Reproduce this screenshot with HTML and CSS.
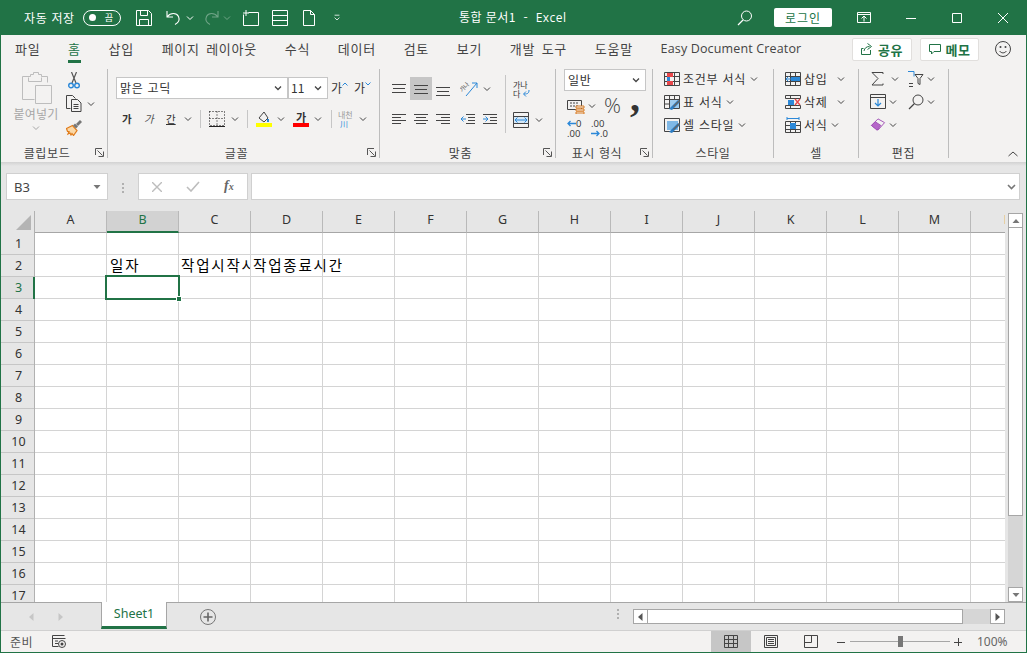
FILE: index.html
```html
<!DOCTYPE html>
<html lang="ko">
<head>
<meta charset="utf-8">
<title>통합 문서1 - Excel</title>
<link rel="stylesheet" href="styles.css">
</head>
<body>
<div class="window">
  <header class="titlebar">
    <div class="qat">
      <span class="autosave">자동 저장</span>
      <span class="toggle"><i class="dot"></i><b>끔</b></span>
      <svg class="w16 ml15" viewBox="0 0 16 16"><path d="M.5.5h12l3 3v12H.5zM4.500.5v5h7v-5M3.500 15.500v-6h9v6" fill="none" stroke="#fff"/></svg>
      <svg class="w16 ml14" viewBox="0 0 16 16"><path d="M1 1v6h6M1.500 6.500c3-4 9-4 11 0 1.500 3.500-.5 6.500-3.500 8" fill="none" stroke="#fff" stroke-width="1.100"/></svg>
      <svg class="w8 ml4" viewBox="0 0 8 8"><path d="M1 2.500l3 3 3-3" fill="none" stroke="#fff"/></svg>
      <svg class="w16 ml9 faded" viewBox="0 0 16 16"><path d="M15 1v6H9M14.500 6.500c-3-4-9-4-11 0-1.500 3.500.5 6.500 3.500 8" fill="none" stroke="#fff" stroke-width="1.100"/></svg>
      <svg class="w8 ml4 faded" viewBox="0 0 8 8"><path d="M1 2.500l3 3 3-3" fill="none" stroke="#fff"/></svg>
      <svg class="w16 ml12" viewBox="0 0 16 16"><path d="M5.500 2.500h10v13H.5v-11M0 3h6M3 0v6" fill="none" stroke="#fff"/></svg>
      <svg class="w16 ml13" viewBox="0 0 16 16"><path d="M.5.500h15v15H.5zM.5 5.500h15M.5 10.500h15" fill="none" stroke="#fff"/></svg>
      <svg class="w12x16 ml15" viewBox="0 0 12 16"><path d="M.5.500h7l4 4v11H.5zM7.500.500v4h4" fill="none" stroke="#fff"/></svg>
      <svg class="w8 ml18" viewBox="0 0 8 10"><path d="M1 1.500h6M1 4.500l3 3 3-3" fill="none" stroke="#fff"/></svg>
    </div>
    <div class="doctitle">통합 문서1&nbsp; -&nbsp; <span class="latin">Excel</span></div>
    <div class="winctl">
      <svg class="w16" viewBox="0 0 16 16"><circle cx="9.500" cy="6" r="5" fill="none" stroke="#fff"/><path d="M6 10l-5 5" fill="none" stroke="#fff" stroke-width="1.200"/></svg>
      <span class="signin">로그인</span>
      <svg class="w14 ml25" viewBox="0 0 14 11"><path d="M.5.500h13v10H.5zM.5 2.500h13M7 9.500V4.500M4.500 6.500L7 4l2.500 2.500" fill="none" stroke="#fff"/></svg>
      <svg class="w10 ml35" viewBox="0 0 10 10"><path d="M0 5.500h10" stroke="#fff"/></svg>
      <svg class="w10 ml36" viewBox="0 0 10 10"><path d="M.5.500h9v9h-9z" fill="none" stroke="#fff"/></svg>
      <svg class="w10 ml36" viewBox="0 0 10 10"><path d="M0 0l10 10M10 0L0 10" stroke="#fff"/></svg>
    </div>
  </header>

  <nav class="tabs">
    <span>파일</span><span class="active">홈</span><span>삽입</span><span>페이지 레이아웃</span><span>수식</span><span>데이터</span><span>검토</span><span>보기</span><span>개발 도구</span><span>도움말</span><span class="latin easy">Easy Document Creator</span>
    <span class="tab-actions">
      <span class="pill pill-share">
        <svg class="w12" viewBox="0 0 12 12"><path d="M9.500 7v4.500H.5v-6h2M3 8c.5-3 2.500-4.500 5.500-4.500M6.500.5l4 3-4 3" fill="none" stroke="#217346"/></svg>공유</span>
      <span class="pill pill-memo">
        <svg class="w12" viewBox="0 0 12 12"><path d="M.5 1.500h11v7H5l-2.500 2.500v-2.500h-2z" fill="none" stroke="#217346"/></svg>메모</span>
      <svg class="smiley" viewBox="0 0 16 16"><circle cx="8" cy="8" r="7.500" fill="none" stroke="#444"/><circle cx="5.500" cy="6" r="1" fill="#444"/><circle cx="10.500" cy="6" r="1" fill="#444"/><path d="M4.500 10c2 2.500 5 2.500 7 0" fill="none" stroke="#444"/></svg>
    </span>
  </nav>

  <section class="ribbon">
    <div class="group g-clip">
      <div class="body clip-body">
        <div class="paste">
          <svg class="paste-ic" viewBox="0 0 30 33"><path d="M.5 4.500h8v-2h3v-2h5v2h3v2h6v6M.5 4.500v23h12" fill="none" stroke="#bdbdbd"/><path d="M6.500 5.500v4h13v-4" fill="none" stroke="#bdbdbd"/><path d="M13.500 13.500h16v18h-16z" fill="#f3f2f1" stroke="#bdbdbd"/></svg>
          <span class="paste-label">붙여넣기</span>
          <svg class="w8 chevg" viewBox="0 0 8 8"><path d="M1 2.500l3 3 3-3" fill="none" stroke="#a6a6a6"/></svg>
        </div>
        <div class="clip-tools">
          <svg class="cut" viewBox="0 0 12 17"><path d="M3.500 0l4.500 11M8.500 0L4 11" fill="none" stroke="#555" stroke-width="1.200"/><circle cx="3" cy="13.500" r="2.300" fill="none" stroke="#2b88d8" stroke-width="1.400"/><circle cx="9" cy="13.500" r="2.300" fill="none" stroke="#2b88d8" stroke-width="1.400"/></svg>
          <div class="copy">
            <svg class="copy-ic" viewBox="0 0 16 17"><path d="M4.500 13.500H.5V.5h6l3 3M5.500 4.500h6l3.500 3.500v8.500H5.500zM7.500 9.500h5M7.500 11.500h5M7.500 13.500h5" fill="none" stroke="#444"/></svg>
            <svg class="w8 ml5" viewBox="0 0 8 8"><path d="M1 2.500l3 3 3-3" fill="none" stroke="#444"/></svg>
          </div>
          <svg class="brush" viewBox="0 0 16 16"><path d="M.5 8.500l6-3 4.500 5-3.500 5-1.500-2-1 1.500-1-2-2 1 1-2.500-1.500 0z" fill="#fbd9a8" stroke="#e07b1a" stroke-width="1.200"/><path d="M7 5.500l2-2 3 3-2 2z" fill="#777"/><path d="M10 4l4-4 2 2-4 4z" fill="#777"/></svg>
        </div>
      </div>
      <div class="glabel"><i></i><span>클립보드</span><svg class="launch" viewBox="0 0 9 9"><path d="M.5 7V.5H7M2.500 2.500l5 5M8.500 3.500v5h-5" fill="none" stroke="#555"/></svg></div>
    </div>

    <div class="group g-font">
      <div class="body font-body">
        <div class="font-row1">
          <span class="combo combo-font">맑은 고딕<svg class="w8" viewBox="0 0 8 8"><path d="M1 2.500l3 3 3-3" fill="none" stroke="#444" stroke-width="1.300"/></svg></span>
          <span class="combo combo-size">11<svg class="w8" viewBox="0 0 8 8"><path d="M1 2.500l3 3 3-3" fill="none" stroke="#444" stroke-width="1.300"/></svg></span>
          <span class="fontstep">가<svg class="w6 up" viewBox="0 0 6 4"><path d="M.5 3.500L3 1l2.500 2.500" fill="none" stroke="#2b88d8"/></svg></span>
          <span class="fontstep small">가<svg class="w6 up" viewBox="0 0 6 4"><path d="M.5.5L3 3 5.500.5" fill="none" stroke="#2b88d8"/></svg></span>
        </div>
        <div class="font-row2">
          <b class="fs">가</b><em class="fs ml12">가</em><span class="fs ml12 under">간</span>
          <svg class="w8 ml8" viewBox="0 0 8 8"><path d="M1 2.500l3 3 3-3" fill="none" stroke="#444"/></svg>
          <i class="vsep ml8"></i>
          <svg class="w16 ml8" viewBox="0 0 16 16"><path d="M.5.500h15v14H.5zM8 .5v14M.5 7.500h15" fill="none" stroke="#111" stroke-dasharray="1 2"/><path d="M0 15.500h16" stroke="#222"/></svg>
          <svg class="w8 ml6" viewBox="0 0 8 8"><path d="M1 2.500l3 3 3-3" fill="none" stroke="#444"/></svg>
          <i class="vsep ml8"></i>
          <svg class="w16 ml8" viewBox="0 0 16 16"><path d="M3 7l5-6 4 6-4 4z" fill="none" stroke="#444"/><path d="M12 8v3" stroke="#2b88d8" stroke-width="2"/><path d="M0 12h16v4H0z" fill="#ffff00"/></svg>
          <svg class="w8 ml5" viewBox="0 0 8 8"><path d="M1 2.500l3 3 3-3" fill="none" stroke="#444"/></svg>
          <span class="fcolor ml8">가</span>
          <svg class="w8 ml5" viewBox="0 0 8 8"><path d="M1 2.500l3 3 3-3" fill="none" stroke="#444"/></svg>
          <i class="vsep ml9"></i>
          <span class="ruby ml6">내천<br><u>川</u></span>
          <svg class="w8 ml9" viewBox="0 0 8 8"><path d="M1 2.500l3 3 3-3" fill="none" stroke="#444"/></svg>
        </div>
      </div>
      <div class="glabel"><i></i><span>글꼴</span><svg class="launch" viewBox="0 0 9 9"><path d="M.5 7V.5H7M2.500 2.500l5 5M8.500 3.500v5h-5" fill="none" stroke="#555"/></svg></div>
    </div>

    <div class="group g-align">
      <div class="body align-body">
        <div class="align-main">
          <div class="al-row1">
            <span class="albtn"><svg class="w14" viewBox="0 0 14 11"><path d="M0 1.500h14M1 5.500h12M0 9.500h14" stroke="#444"/></svg></span>
            <span class="albtn on"><svg class="w14" viewBox="0 0 14 11"><path d="M0 2.500h14M1 6.500h12M0 10.500h14" stroke="#444"/></svg></span>
            <span class="albtn low"><svg class="w14" viewBox="0 0 14 11"><path d="M0 1.500h14M1 5.500h12M0 9.500h14" stroke="#444"/></svg></span>
            <svg class="orient" viewBox="0 0 18 16"><path d="M6 15L17 2M12 2h5v5" fill="none" stroke="#2b88d8"/><text x="0" y="9" class="tiny" transform="rotate(-45 4 8)">가나</text></svg>
            <svg class="w8 ml5" viewBox="0 0 8 8"><path d="M1 2.500l3 3 3-3" fill="none" stroke="#444"/></svg>
          </div>
          <div class="al-row2">
            <svg class="w14" viewBox="0 0 14 11"><path d="M0 .5h14M0 3.500h9M0 6.500h14M0 9.500h9" stroke="#444"/></svg>
            <svg class="w14 ml8" viewBox="0 0 14 11"><path d="M0 .5h14M2 3.500h10M0 6.500h14M2 9.500h10" stroke="#444"/></svg>
            <svg class="w14 ml8" viewBox="0 0 14 11"><path d="M0 .5h14M5 3.500h9M0 6.500h14M5 9.500h9" stroke="#444"/></svg>
            <svg class="w14 ml11" viewBox="0 0 14 11"><path d="M5 .5h9M7 3.500h7M7 6.500h7M5 9.500h9" stroke="#444"/><path d="M5 5H0M2.500 2.500L0 5l2.500 2.500" fill="none" stroke="#2b88d8"/></svg>
            <svg class="w14 ml8" viewBox="0 0 14 11"><path d="M0 .5h14M7 3.500h7M7 6.500h7M0 9.500h14" stroke="#444"/><path d="M0 5h5M2.500 2.500L5 5 2.500 7.500" fill="none" stroke="#2b88d8"/></svg>
          </div>
        </div>
        <i class="vsep tall"></i>
        <div class="align-side">
          <div class="wrap"><span class="wraptext">가나<br>다</span><svg class="wrapar" viewBox="0 0 8 8"><path d="M7 1c0 3-1 4-5 4M4 2.500L1.500 5 4 7.500" fill="none" stroke="#2b88d8"/></svg></div>
          <div class="merge">
            <svg class="w16" viewBox="0 0 16 16"><path d="M.5.500h15v15H.5zM.5 4.500h15M.5 11.500h15" fill="none" stroke="#444"/><path d="M1 5h14v6H1z" fill="#d5e8f7"/><path d="M2 8h12M4.500 5.500L2 8l2.500 2.500M11.500 5.500L14 8l-2.500 2.500" fill="none" stroke="#2b88d8"/></svg>
            <svg class="w8 ml6" viewBox="0 0 8 8"><path d="M1 2.500l3 3 3-3" fill="none" stroke="#444"/></svg>
          </div>
        </div>
      </div>
      <div class="glabel"><i></i><span>맞춤</span><svg class="launch" viewBox="0 0 9 9"><path d="M.5 7V.5H7M2.500 2.500l5 5M8.500 3.500v5h-5" fill="none" stroke="#555"/></svg></div>
    </div>

    <div class="group g-num">
      <div class="body num-body">
        <span class="combo combo-num">일반<svg class="w8" viewBox="0 0 8 8"><path d="M1 2.500l3 3 3-3" fill="none" stroke="#444" stroke-width="1.300"/></svg></span>
        <div class="num-row">
          <svg class="acct" viewBox="0 0 18 16"><path d="M.5 2.500h14v9H.5z" fill="none" stroke="#444"/><path d="M3 5h8M3 8h8" stroke="#444" stroke-dasharray="2 1"/><path d="M9 8h8v2H9zM9 11h8v2H9zM9 14h8v2H9z" fill="#f3f2f1" stroke="#d97a20"/></svg>
          <svg class="w8 ml3" viewBox="0 0 8 8"><path d="M1 2.500l3 3 3-3" fill="none" stroke="#444"/></svg>
          <span class="pct">%</span><span class="comma">,</span>
        </div>
        <div class="num-row row3">
          <span class="dec"><svg class="dec-ar" viewBox="0 0 9 7"><path d="M9 3.500H1M3.500 1L1 3.500 3.500 6" fill="none" stroke="#2b88d8" stroke-width="1.300"/></svg><em>0</em><br><em>.00</em></span>
          <span class="dec ml8"><em>.00</em><br><svg class="dec-ar" viewBox="0 0 9 7"><path d="M0 3.500h8M5.500 1L8 3.500 5.500 6" fill="none" stroke="#2b88d8" stroke-width="1.300"/></svg><em>.0</em></span>
        </div>
      </div>
      <div class="glabel"><i></i><span>표시 형식</span><svg class="launch" viewBox="0 0 9 9"><path d="M.5 7V.5H7M2.500 2.500l5 5M8.500 3.500v5h-5" fill="none" stroke="#555"/></svg></div>
    </div>

    <div class="group g-style">
      <div class="body stack style-body">
        <div class="srow"><svg class="w16" viewBox="0 0 16 16"><path d="M.5 1.500h15v13H.5zM5.500 1.500v13M10.500 1.500v13M.5 5.500h15M.5 10.500h15" fill="none" stroke="#444"/><path d="M3 2h6v4H3zM3 10h6v4H3z" fill="#e8484b"/><path d="M3 6h3v4H3z" fill="#2b88d8"/></svg><span>조건부 서식</span><svg class="w8" viewBox="0 0 8 8"><path d="M1 2.500l3 3 3-3" fill="none" stroke="#444"/></svg></div>
        <div class="srow"><svg class="w16" viewBox="0 0 16 16"><path d="M.5 1.500h15v13H.5zM5.500 1.500v13M10.500 1.500v13M.5 5.500h15M.5 10h15" fill="none" stroke="#444"/><path d="M6 6h9v8H6z" fill="#9fcbee"/><path d="M5 15l9-9 2 2-8 8z" fill="#2b7cc4"/><path d="M9 12l6-6 1 1-6 6z" fill="#666"/></svg><span>표 서식</span><svg class="w8" viewBox="0 0 8 8"><path d="M1 2.500l3 3 3-3" fill="none" stroke="#444"/></svg></div>
        <div class="srow"><svg class="w16" viewBox="0 0 16 16"><path d="M.5 1.500h15v13H.5z" fill="none" stroke="#444"/><path d="M3 4h11v9H3z" fill="#7fb8e6"/><path d="M5 15l9-9 2 2-8 8z" fill="#2b7cc4"/><path d="M9 12l6-6 1 1-6 6z" fill="#666"/></svg><span>셀 스타일</span><svg class="w8" viewBox="0 0 8 8"><path d="M1 2.500l3 3 3-3" fill="none" stroke="#444"/></svg></div>
      </div>
      <div class="glabel center"><span>스타일</span></div>
    </div>

    <div class="group g-cell">
      <div class="body stack cell-body">
        <div class="srow"><svg class="w16" viewBox="0 0 16 16"><path d="M.5 1.500h15v13H.5zM5.500 1.500v13M10.500 1.500v13M.5 5.500h15M.5 10.500h15" fill="none" stroke="#444"/><path d="M6 6h9v4H6z" fill="#2b88d8"/><path d="M7 8H1M3.500 5.500L1 8l2.500 2.500" fill="none" stroke="#2b88d8"/></svg><span class="w36">삽입</span><svg class="w8" viewBox="0 0 8 8"><path d="M1 2.500l3 3 3-3" fill="none" stroke="#444"/></svg></div>
        <div class="srow"><svg class="w16" viewBox="0 0 16 16"><path d="M.5 1.500h15v3H.5zM.5 11.500h15v3H.5zM5.500 11.500v3M5.500 1.500v3" fill="none" stroke="#444"/><path d="M3 6h6v5H3z" fill="#2b88d8"/><path d="M10 5l5 6M15 5l-5 6" stroke="#e8484b" stroke-width="1.300"/></svg><span class="w36">삭제</span><svg class="w8" viewBox="0 0 8 8"><path d="M1 2.500l3 3 3-3" fill="none" stroke="#444"/></svg></div>
        <div class="srow"><svg class="w16" viewBox="0 0 16 16"><path d="M.5 4.500h15v11H.5zM5.500 4.500v11M10.500 4.500v11M.5 8.500h15M.5 12.500h15" fill="none" stroke="#444"/><path d="M5 6h6v6H5z" fill="#2b88d8"/><path d="M2 1.500h12M2 0v3M14 0v3" fill="none" stroke="#2b88d8"/></svg><span class="w30">서식</span><svg class="w8" viewBox="0 0 8 8"><path d="M1 2.500l3 3 3-3" fill="none" stroke="#444"/></svg></div>
      </div>
      <div class="glabel center"><span>셀</span></div>
    </div>

    <div class="group g-edit">
      <div class="body edit-body">
        <div class="erow">
          <svg class="sum" viewBox="0 0 13 14"><path d="M12 2V.5H1l6 6-6 6.500h11v-1.500" fill="none" stroke="#444"/></svg>
          <svg class="w8 ml7" viewBox="0 0 8 8"><path d="M1 2.500l3 3 3-3" fill="none" stroke="#444"/></svg>
          <svg class="w16 ml9" viewBox="0 0 16 16"><path d="M0 .5h6v5" fill="none" stroke="#2b88d8"/><path d="M1 12.500h4M1 15.500h4" stroke="#444"/><path d="M7 3.500h8l-3 4v6l-2-1V7.500z" fill="none" stroke="#444"/></svg>
          <svg class="w8 ml3" viewBox="0 0 8 8"><path d="M1 2.500l3 3 3-3" fill="none" stroke="#444"/></svg>
        </div>
        <div class="erow">
          <svg class="w16 fillic" viewBox="0 0 16 15"><path d="M.5.500h15v14H.5zM.5 3.500h15" fill="none" stroke="#444"/><path d="M8 5v7M5 9l3 3 3-3" fill="none" stroke="#2b88d8" stroke-width="1.200"/></svg>
          <svg class="w8 ml3" viewBox="0 0 8 8"><path d="M1 2.500l3 3 3-3" fill="none" stroke="#444"/></svg>
          <svg class="w16 ml11" viewBox="0 0 16 16"><circle cx="10" cy="6" r="5" fill="none" stroke="#444"/><path d="M6.500 9.500L1 15" stroke="#444" stroke-width="1.300"/></svg>
          <svg class="w8 ml3" viewBox="0 0 8 8"><path d="M1 2.500l3 3 3-3" fill="none" stroke="#444"/></svg>
        </div>
        <div class="erow">
          <svg class="w16 fillic" viewBox="0 0 16 16"><path d="M1 9l7-7 7 4-7 8z" fill="#f3f2f1" stroke="#a04fb5"/><path d="M1 9l4-4 6 4-4 5z" fill="#b567c9" stroke="#a04fb5"/></svg>
          <svg class="w8 ml3" viewBox="0 0 8 8"><path d="M1 2.500l3 3 3-3" fill="none" stroke="#444"/></svg>
        </div>
      </div>
      <div class="glabel center"><span>편집</span></div>
    </div>

    <div class="collapse"><svg class="w10" viewBox="0 0 10 6"><path d="M.5 5L5 1l4.500 4" fill="none" stroke="#444"/></svg></div>
  </section>

  <section class="formula">
    <div class="namebox"><span>B3</span><svg class="w8" viewBox="0 0 8 5"><path d="M.5.500h7L4 4.500z" fill="#777"/></svg></div>
    <div class="fdots"></div>
    <div class="fxgroup">
      <svg class="w10" viewBox="0 0 10 10"><path d="M0 0l10 10M10 0L0 10" stroke="#bdbdbd" stroke-width="1.400"/></svg>
      <svg class="w14" viewBox="0 0 14 11"><path d="M1 6l4 4 8-9" fill="none" stroke="#bdbdbd" stroke-width="1.600"/></svg>
      <span class="fx">f<small>x</small></span>
    </div>
    <div class="finput"><svg class="w8x" viewBox="0 0 9 6"><path d="M1 1l3.500 3.500L8 1" fill="none" stroke="#777" stroke-width="1.600"/></svg></div>
  </section>

  <section class="sheetarea">
    <div class="sheet">
      <div class="colhead">
        <div class="corner"><svg class="corner-ic" viewBox="0 0 15 15"><path d="M15 0v15H0z" fill="#b4b4b4"/></svg></div>
        <span>A</span><span class="sel">B</span><span>C</span><span>D</span><span>E</span><span>F</span><span>G</span><span>H</span><span>I</span><span>J</span><span>K</span><span>L</span><span>M</span><span>N</span>
      </div>
      <div class="gridwrap">
        <div class="rowhead">
          <span>1</span><span>2</span><span class="sel">3</span><span>4</span><span>5</span><span>6</span><span>7</span><span>8</span><span>9</span><span>10</span><span>11</span><span>12</span><span>13</span><span>14</span><span>15</span><span>16</span><span>17</span>
        </div>
        <div class="cells">
          <div class="cell c-b2">일자</div>
          <div class="cell c-c2">작업시작시간</div>
          <div class="cell c-d2">작업종료시간</div>
          <div class="active-cell"><i></i></div>
        </div>
      </div>
    </div>
    <div class="vscroll">
      <span class="sbtn"><svg class="w8" viewBox="0 0 8 5"><path d="M4 .5L7.500 4.500H.5z" fill="#777"/></svg></span>
      <span class="vthumb"></span>
      <span class="vtrack"></span>
      <span class="sbtn"><svg class="w8" viewBox="0 0 8 5"><path d="M.5.500h7L4 4.500z" fill="#777"/></svg></span>
    </div>
  </section>

  <section class="tabbar">
    <div class="tabnav">
      <svg class="w5" viewBox="0 0 5 8"><path d="M4.500 0v8L0 4z" fill="#c6c6c6"/></svg>
      <svg class="w5" viewBox="0 0 5 8"><path d="M.5 0v8L5 4z" fill="#c6c6c6"/></svg>
    </div>
    <div class="sheettab">Sheet1</div>
    <svg class="addsheet" viewBox="0 0 16 16"><circle cx="8" cy="8" r="7.500" fill="none" stroke="#777"/><path d="M8 3.500v9M3.500 8h9" stroke="#666" stroke-width="1.600"/></svg>
    <div class="hdots"></div>
    <div class="hscroll">
      <span class="hbtn"><svg class="w5" viewBox="0 0 5 8"><path d="M4.500 0v8L0 4z" fill="#555"/></svg></span>
      <span class="hthumb"></span>
      <span class="htrack"></span>
      <span class="hbtn"><svg class="w5" viewBox="0 0 5 8"><path d="M.5 0v8L5 4z" fill="#555"/></svg></span>
    </div>
  </section>

  <footer class="status">
    <span class="ready">준비</span>
    <svg class="macro" viewBox="0 0 14 13"><path d="M.5.500h12M.5 3.500h13M.5.500v11h6" fill="none" stroke="#444"/><path d="M3 6h3M3 8.500h3" stroke="#444"/><circle cx="10" cy="9" r="3.500" fill="none" stroke="#444"/><circle cx="10" cy="9" r="1.500" fill="#444"/></svg>
    <div class="views">
      <span class="viewbtn on"><svg class="w14" viewBox="0 0 14 13"><path d="M.5.500h13v12H.5zM4.500.500v12M9.500.500v12M.5 4.500h13M.5 8.500h13" fill="none" stroke="#444"/></svg></span>
      <span class="viewbtn"><svg class="w14" viewBox="0 0 14 13"><path d="M.5.500h13v12H.5zM2.500 2.500h9v8h-9zM4 4.500h6M4 6.500h6M4 8.500h6" fill="none" stroke="#444"/></svg></span>
      <span class="viewbtn"><svg class="w14" viewBox="0 0 14 13"><path d="M.5.500h13v12H.5zM.5 7.500h7V.5" fill="none" stroke="#444"/></svg></span>
    </div>
    <div class="zoomctl">
      <svg class="zbtn" viewBox="0 0 8 8"><path d="M0 4.500h8" stroke="#444"/></svg>
      <span class="slider"><i></i></span>
      <svg class="zbtn" viewBox="0 0 8 8"><path d="M0 4.500h8M4.500 0v8" stroke="#444"/></svg>
      <span class="zoompct">100%</span>
    </div>
  </footer>
</div>
</body>
</html>
```

FILE: styles.css
```css
* { box-sizing: border-box; }
html, body { margin: 0; padding: 0; }
body {
  width: 1027px; height: 653px; overflow: hidden;
  font-family: "Noto Sans CJK KR", sans-serif;
  font-size: 12px; color: #444;
}
svg { display: block; flex: none; }
.latin { font-family: "Open Sans", "Noto Sans", sans-serif; }
.window {
  width: 1027px; height: 653px; display: flex; flex-direction: column;
  border: 1px solid #217346; border-top: 0; background: #f3f2f1;
}
.w5 { width: 5px; height: 8px; }
.w6 { width: 6px; height: 4px; }
.w8 { width: 8px; height: 8px; }
.w10 { width: 10px; height: 10px; }
.w12 { width: 12px; height: 12px; }
.w14 { width: 14px; height: 11px; }
.w16 { width: 16px; height: 16px; }
.w12x16 { width: 12px; height: 16px; }
.ml3 { margin-left: 3px; } .ml4 { margin-left: 4px; } .ml5 { margin-left: 5px; }
.ml6 { margin-left: 6px; } .ml7 { margin-left: 7px; } .ml8 { margin-left: 8px; }
.ml9 { margin-left: 9px; } .ml11 { margin-left: 11px; } .ml12 { margin-left: 12px; }
.ml13 { margin-left: 13px; } .ml14 { margin-left: 14px; } .ml15 { margin-left: 15px; }
.ml18 { margin-left: 18px; } .ml25 { margin-left: 25px; } .ml35 { margin-left: 35px; }
.ml36 { margin-left: 36px; }
.faded { opacity: .35; }

/* title bar */
.titlebar {
  height: 35px; flex: none; margin: 0 -1px; background: #217346; color: #fff;
  display: flex; align-items: center; position: relative;
}
.qat { display: flex; align-items: center; padding-left: 24px; }
.autosave { font-size: 12px; line-height: 16px; letter-spacing: .65px; width: 59px; white-space: nowrap; }
.toggle {
  width: 38px; height: 16px; border: 1px solid #fff; border-radius: 8px;
  display: flex; align-items: center; padding: 0 7px 0 5px; justify-content: space-between;
}
.dot { width: 7px; height: 7px; border-radius: 50%; background: #fff; }
.toggle b { font-size: 9px; font-weight: 400; line-height: 12px; }
.doctitle {
  position: absolute; left: 459px; top: 9px; font-size: 12px; line-height: 16px;
  letter-spacing: .45px; white-space: nowrap;
}
.winctl { margin-left: auto; display: flex; align-items: center; padding-right: 19px; }
.signin {
  width: 58px; height: 19px; margin-left: 21px; background: #fff; color: #217346;
  border-radius: 2px; font-size: 12px; line-height: 19px; text-align: center; letter-spacing: 1px;
}

/* tabs */
.tabs {
  height: 28px; flex: none; display: flex; align-items: center; gap: 27.700px;
  padding-left: 14px; font-size: 13px; line-height: 16px; letter-spacing: .75px; word-spacing: 2px; position: relative;
}
.tabs > span { white-space: nowrap; }
.tabs .active { color: #217346; position: relative; }
.tabs .active::after {
  content: ""; display: block; position: absolute; left: 0; right: 0; bottom: -6px;
  height: 3px; background: #217346;
}
.tabs .easy { font-size: 12.500px; letter-spacing: .15px; word-spacing: 0; }
.tabs .tab-actions { margin-left: auto; display: flex; align-items: center; letter-spacing: 0; }
.pill {
  height: 23px; background: #fff; border: 1px solid #e1dfdd; border-radius: 2px;
  color: #217346; font-weight: 700; font-size: 13px; line-height: 21px;
  display: flex; align-items: center; justify-content: center; gap: 5px; letter-spacing: .5px;
}
.pill-share { width: 60px; margin-right: 8px; }
.pill-memo { width: 59px; margin-right: 16px; }
.smiley { width: 16px; height: 16px; margin-right: 15px; }

/* ribbon */
.ribbon {
  height: 99px; flex: none; display: flex; padding-top: 6px; position: relative;
  font-size: 12px;
}
.group {
  height: 89px; border-right: 1px solid #bdbdbd; display: flex; flex-direction: column; flex: none;
}
.g-clip { width: 107px; }
.g-font { width: 272px; }
.g-align { width: 176px; }
.g-num { width: 97px; }
.g-style { width: 121px; }
.g-cell { width: 85px; }
.g-edit { width: 90px; }
.body { height: 71px; flex: none; }
.glabel {
  height: 18px; padding: 5px 14px 0 0; display: grid; grid-template-columns: 1fr auto 1fr;
  line-height: 16px; font-size: 12px; letter-spacing: .6px; color: #444;
}
.glabel.center { grid-template-columns: 1fr; text-align: center; padding-right: 0; }
.launch { width: 9px; height: 9px; justify-self: end; margin-top: 3px; margin-right: -11px; }

.clip-body { display: flex; padding: 3px 0 0 9px; }
.paste { width: 52px; display: flex; flex-direction: column; align-items: center; }
.paste-ic { width: 30px; height: 33px; margin-left: 2px; }
.paste-label { font-size: 12px; line-height: 16px; margin-top: 1px; color: #a6a6a6; letter-spacing: .2px; white-space: nowrap; }
.chevg { margin-top: 2px; }
.clip-tools { display: flex; flex-direction: column; padding-left: 4px; }
.cut { width: 12px; height: 17px; margin-left: 2px; }
.copy { display: flex; align-items: center; margin-top: 6px; }
.copy-ic { width: 16px; height: 17px; }
.brush { margin-top: 8px; width: 16px; height: 16px; }

.font-body { padding: 8px 0 0 8px; }
.font-row1 { display: flex; align-items: center; height: 22px; }
.combo {
  height: 22px; background: #fff; border: 1px solid #c6c6c6; display: flex; align-items: center;
  justify-content: space-between; font-size: 12px; line-height: 16px; padding: 0 5px 0 3px;
  color: #333; letter-spacing: .7px;
}
.combo-font { width: 172px; }
.combo-size { width: 40px; padding-left: 2px; letter-spacing: 0; }
.fontstep { display: flex; font-size: 12px; line-height: 16px; margin-left: 3px; width: 20px; color: #333; }
.fontstep.small { width: 16px; }
.up { margin-top: 2px; }
.font-row2 { display: flex; align-items: center; height: 19px; margin-top: 10px; padding-left: 6px; }
.fs { font-size: 10.500px; line-height: 14px; width: 10px; color: #333; font-style: normal; }
em.fs { font-style: italic; color: #555; }
.under { text-decoration: underline; }
.vsep { width: 1px; height: 18px; background: #c6c6c6; flex: none; }
.vsep.tall { height: 58px; margin-top: -2px; }
.fcolor {
  width: 16px; height: 16px; font-size: 11px; line-height: 12px; text-align: center; font-weight: 700;
  color: #333; border-bottom: 4px solid #ff0000;
}
.ruby { font-size: 8px; line-height: 9px; color: #9a9a9a; width: 12px; text-align: center; white-space: nowrap; }
.ruby u { color: #2b88d8; text-decoration: none; }

.align-body { display: flex; padding: 8px 0 0 12px; }
.align-main { width: 113px; }
.al-row1 { display: flex; align-items: center; height: 23px; }
.albtn { width: 22px; height: 23px; display: flex; align-items: center; justify-content: center; }
.albtn:first-child { width: 14px; margin-right: 4px; }
.albtn.on { background: #c6c6c6; margin-right: 4px; }
.albtn.low { width: 14px; padding-top: 6px; }
.orient { width: 18px; height: 16px; margin-left: 10px; }
.tiny { font-size: 6px; fill: #444; }
.al-row2 { display: flex; align-items: center; margin-top: 14px; height: 11px; }
.align-side { padding-left: 7px; }
.wrap { display: flex; margin-top: 3px; height: 18px; position: relative; width: 18px; }
.wraptext { font-size: 8px; line-height: 9px; color: #333; white-space: nowrap; }
.wrapar { width: 8px; height: 8px; position: absolute; left: 9px; top: 9px; }
.merge { display: flex; align-items: center; margin-top: 14px; }

.num-body { padding: 0 0 0 8px; }
.combo-num { width: 82px; font-size: 12px; padding-left: 3px; }
.num-row { display: flex; align-items: center; height: 19px; margin-top: 5px; padding-left: 3px; }
.acct { width: 18px; height: 16px; }
.pct { font-size: 21px; line-height: 19px; margin-left: 8px; font-family: "Open Sans", sans-serif; font-weight: 300; width: 26px; }
.comma { font-size: 40px; line-height: 4px; font-family: "Liberation Serif", serif; font-weight: 700; height: 19px; color: #333; }
.row3 { margin-top: 4px; }
.dec { font-size: 9.500px; line-height: 9.500px; width: 16px; white-space: nowrap; font-family: "Open Sans", sans-serif; color: #333; }
.dec em { font-style: normal; }
.dec-ar { display: inline-block; width: 9px; height: 7px; }

.stack { padding: 0 0 0 11px; margin-top: -2px; margin-bottom: 2px; }
.srow { height: 23px; display: flex; align-items: center; gap: 3px; white-space: nowrap; letter-spacing: .75px; line-height: 16px; color: #333; }
.srow span { margin-right: 1px; }
.w36 { width: 29px; }
.w30 { width: 23px; }
.cell-body { padding-left: 11px; }

.edit-body { padding: 0 0 0 11px; margin-top: -2px; margin-bottom: 2px; }
.erow { display: flex; align-items: center; height: 23px; }
.sum { width: 13px; height: 14px; margin-left: 1px; }
.fillic { height: 15px; }

.collapse { position: absolute; right: 8px; bottom: 3px; }

/* formula bar */
.formula {
  height: 49px; flex: none; background: linear-gradient(#d2d2d2, #e6e6e6 4px);
  display: flex; padding: 11px 5px 11px 5px;
}
.namebox {
  width: 102px; background: #fff; border: 1px solid #d0d0d0; display: flex; align-items: center;
  justify-content: space-between; padding: 0 6px 0 7px; font-size: 13px; color: #444;
  font-family: "Noto Sans", sans-serif;
}
.fdots { width: 30px; position: relative; }
.fdots::before {
  content: ""; position: absolute; left: 14px; top: 10px; width: 2px; height: 2px; background: #b0b0b0;
  box-shadow: 0 4px #b0b0b0, 0 8px #b0b0b0;
}
.fxgroup {
  width: 110px; background: #fff; border: 1px solid #d0d0d0; display: flex; align-items: center;
  padding: 0 10px 0 13px; gap: 24px;
}
.fx { font-family: "Liberation Serif", serif; font-style: italic; font-weight: 700; font-size: 14px; color: #666; line-height: 14px; }
.fx small { font-size: 10px; }
.finput {
  width: 769px; margin-left: 3px; background: #fff; border: 1px solid #d0d0d0;
  display: flex; align-items: center; justify-content: flex-end; padding-right: 3px;
}
.w8x { width: 9px; height: 6px; }

/* sheet */
.sheetarea { height: 391px; flex: none; display: flex; background: #e6e6e6; }
.sheet { width: 1004px; flex: none; display: flex; flex-direction: column; overflow: hidden; }
.colhead { height: 22px; flex: none; display: flex; background: #e6e6e6; }
.corner { width: 34px; flex: none; border-right: 1px solid #b1b1b1; display: flex; justify-content: flex-end; align-items: flex-end; padding: 0 3px 3px 0; }
.corner-ic { width: 15px; height: 15px; }
.colhead span {
  width: 72px; flex: none; text-align: center; font-family: "Noto Sans", sans-serif; font-size: 12.500px;
  line-height: 18px; color: #333; border-right: 1px solid #b9b9b9; border-bottom: 1px solid #a6a6a6;
}
.colhead span:last-child { padding-left: 3px; border-right: 0; }
.colhead span.sel { background: #d2d2d2; color: #217346; border-bottom: 2px solid #217346; }
.gridwrap { flex: 1; display: flex; overflow: hidden; }
.rowhead { width: 34px; flex: none; background: #e6e6e6; border-right: 1px solid #b1b1b1; }
.rowhead span {
  display: block; height: 22px; text-align: center; font-family: "Noto Sans", sans-serif; font-size: 12.500px;
  line-height: 22px; color: #333; border-bottom: 1px solid #c6c6c6; padding-left: 2px;
}
.rowhead span.sel { background: #e0e0e0; color: #217346; position: relative; }
.rowhead span.sel::after { content: ""; position: absolute; right: -1px; top: 0; width: 2px; height: 22px; background: #217346; }
.cells {
  flex: 1; display: grid; grid-template-columns: repeat(14, 72px); grid-auto-rows: 22px; background-color: #fff;
  background-image:
    linear-gradient(to right, transparent 71px, #d4d4d4 71px),
    linear-gradient(to bottom, transparent 21px, #d4d4d4 21px);
  background-size: 72px 22px;
  border-right: 1px solid #a6a6a6;
}
.cell {
  grid-row: 2; font-size: 14.500px; line-height: 19px; color: #000; white-space: nowrap; overflow: hidden;
  padding-left: 3px; letter-spacing: 1.800px;
}
.c-b2 { grid-column: 2; }
.c-c2 { grid-column: 3; padding-left: 2px; margin-right: 1px; }
.c-d2 { grid-column: 4 / span 2; padding-left: 2px; }
.active-cell {
  grid-row: 3; grid-column: 2; margin: -2px -1px -1px -2px; border: 2px solid #217346; position: relative;
}
.active-cell i {
  position: absolute; right: -4px; bottom: -4px; background: #217346; border: 1px solid #fff;
  box-sizing: content-box; width: 4px; height: 4px;
}
.vscroll { flex: 1; padding: 2px 3px 0 3px; display: flex; flex-direction: column; }
.sbtn {
  height: 15px; flex: none; background: #fff; border: 1px solid #a6a6a6; display: flex; align-items: center; justify-content: center;
}
.vthumb { height: 288px; flex: none; background: #fff; border: 1px solid #a6a6a6; border-top: 0; }
.vtrack { flex: 1; background: #d6d6d6; }

/* sheet tabs */
.tabbar {
  height: 28px; flex: none; background: #e6e6e6; border-top: 1px solid #a6a6a6; display: flex; position: relative;
}
.tabnav { width: 100px; display: flex; align-items: center; gap: 24px; padding: 0 0 0 28px; flex: none; }
.sheettab {
  width: 66px; height: 27px; margin-top: -1px; background: #fff; color: #217346; text-align: center;
  border: 1px solid #a6a6a6; border-top: 0; border-bottom: 3px solid #217346; font-family: "Noto Sans", sans-serif;
  font-size: 12.500px; line-height: 24px;
}
.addsheet { width: 16px; height: 16px; margin: 6px 0 0 33px; }
.hdots { position: relative; width: 2px; margin-left: 401px; }
.hdots::before {
  content: ""; position: absolute; left: 0; top: 6px; width: 2px; height: 2px; background: #b0b0b0;
  box-shadow: 0 4px #b0b0b0, 0 8px #b0b0b0;
}
.hscroll { display: flex; height: 15px; margin: 6px 0 0 14px; width: 372px; }
.hbtn { width: 15px; flex: none; background: #fff; border: 1px solid #a6a6a6; display: flex; align-items: center; justify-content: center; }
.hthumb { width: 315px; flex: none; background: #fff; border: 1px solid #a6a6a6; border-left: 0; }
.htrack { flex: 1; background: #d6d6d6; }

/* status */
.status {
  flex: 1; border-top: 1px solid #d0d0d0; display: flex; align-items: center; background: #f3f2f1; font-size: 12px;
}
.ready { margin-left: 9px; line-height: 16px; letter-spacing: .4px; width: 28px; color: #555; }
.macro { width: 14px; height: 13px; margin-left: 14px; }
.views { display: flex; margin-left: 645px; align-self: stretch; }
.viewbtn { width: 40px; display: flex; align-items: center; justify-content: center; }
.viewbtn.on { background: #c6c6c6; }
.viewbtn svg { height: 13px; }
.zoomctl { display: flex; align-items: center; margin-left: 6px; }
.zbtn { width: 8px; height: 8px; }
.slider { width: 100px; height: 1px; background: #a6a6a6; margin: 0 4px 0 5px; position: relative; }
.slider i { position: absolute; left: 48px; top: -5px; width: 5px; height: 11px; background: #777; }
.zoompct { margin-left: 15px; font-family: "Noto Sans", sans-serif; font-size: 12px; line-height: 16px; color: #666; }
```
